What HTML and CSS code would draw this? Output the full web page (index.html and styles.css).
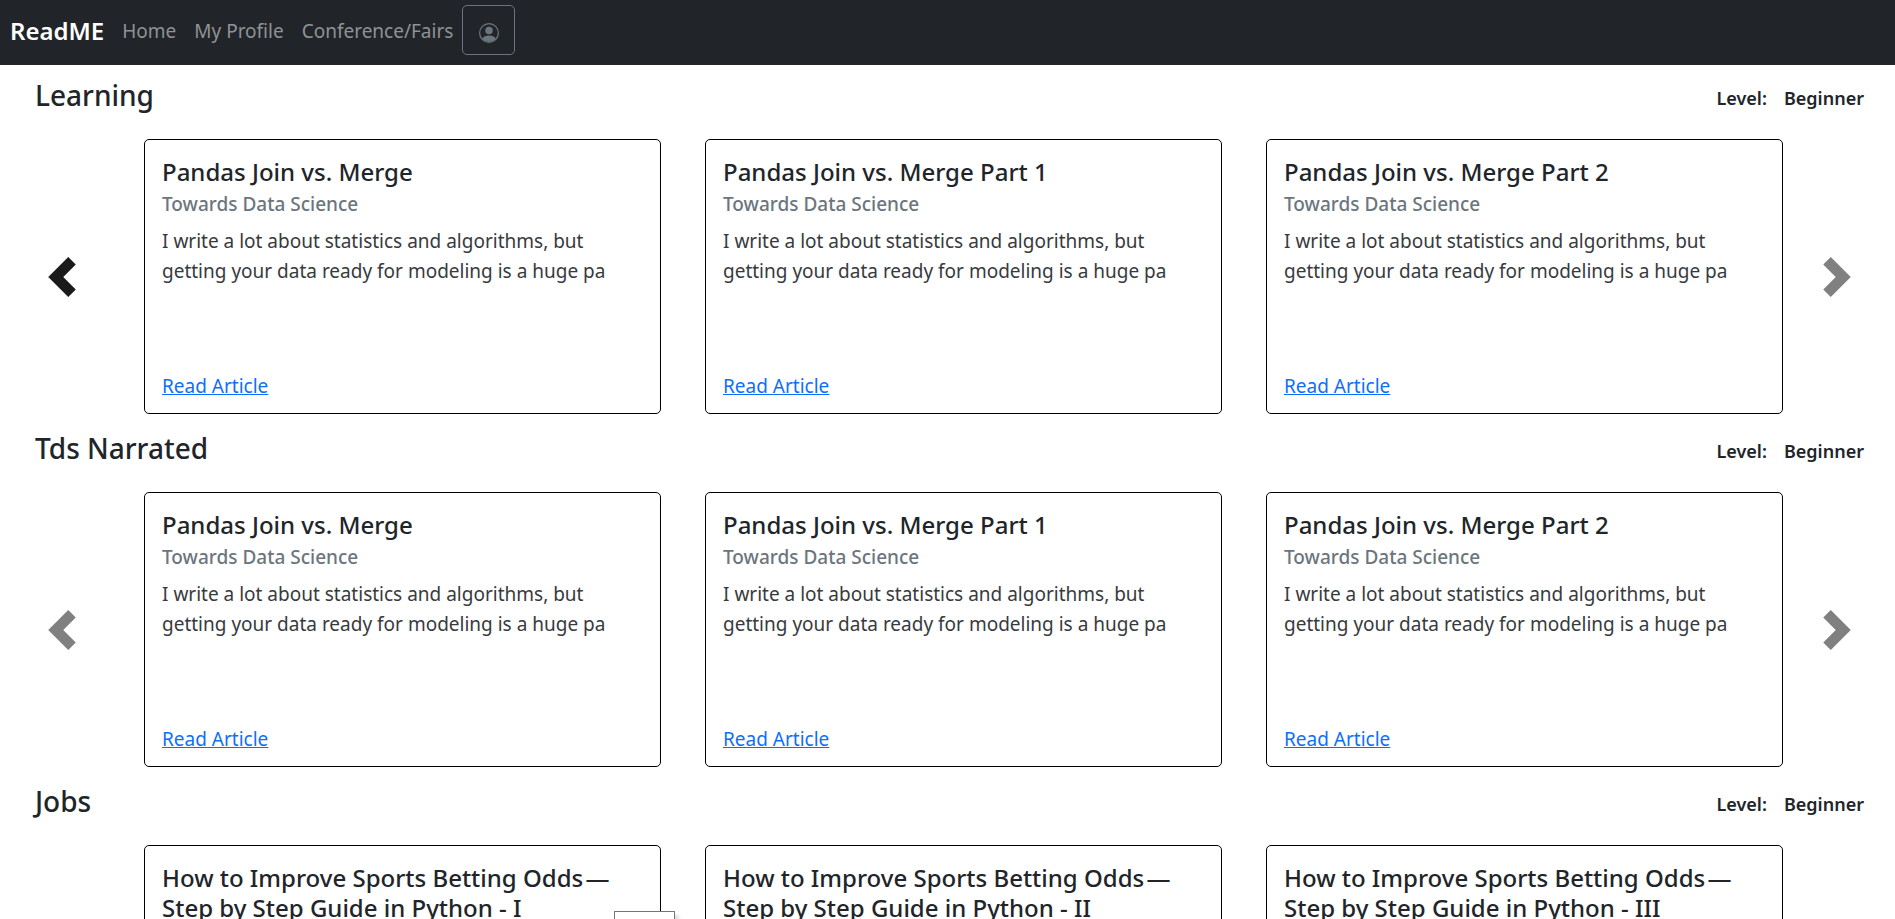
FILE: index.html
```
<!DOCTYPE html>
<html lang="en">
<head>
<meta charset="utf-8">
<title>ReadME</title>
<link rel="stylesheet" href="styles.css">
</head>
<body>
<svg class="symbols" aria-hidden="true">
  <symbol id="chevron-left" viewBox="0 0 8 8"><path d="M5.25 0l-4 4 4 4 1.5-1.5L4.25 4l2.5-2.5L5.25 0z"/></symbol>
  <symbol id="chevron-right" viewBox="0 0 8 8"><path d="M2.75 0l-1.5 1.5L3.75 4l-2.5 2.5L2.75 8l4-4-4-4z"/></symbol>
</svg>
<nav class="navbar">
  <a class="brand" href="#">ReadME</a>
  <a class="nav-link" href="#">Home</a>
  <a class="nav-link" href="#">My Profile</a>
  <a class="nav-link" href="#">Conference/Fairs</a>
  <button class="account" type="button" aria-label="Account">
    <svg class="account-icon" viewBox="0 0 16 16" fill="currentColor" aria-hidden="true">
      <path d="M13.468 12.37C12.758 11.226 11.195 10 8 10s-4.757 1.225-5.468 2.37A6.987 6.987 0 0 0 8 15a6.987 6.987 0 0 0 5.468-2.63z"/>
      <path d="M8 9a3 3 0 1 0 0-6 3 3 0 0 0 0 6z"/>
      <path fill-rule="evenodd" d="M8 1a7 7 0 1 0 0 14A7 7 0 0 0 8 1zM0 8a8 8 0 1 1 16 0A8 8 0 0 1 0 8z"/>
    </svg>
  </button>
</nav>
<main class="content">
  <section class="topic">
    <header class="topic-header">
      <h2 class="topic-title">Learning</h2>
      <p class="level"><span>Level:</span><span>Beginner</span></p>
    </header>
    <div class="carousel">
      <button class="control control-prev control-active" type="button" aria-label="Previous"><svg class="chevron"><use href="#chevron-left"/></svg></button>
      <div class="cards">
        <article class="card">
          <h3 class="card-title">Pandas Join vs. Merge</h3>
          <h4 class="card-source">Towards Data Science</h4>
          <p class="card-text">I write a lot about statistics and algorithms, but getting your data ready for modeling is a huge pa</p>
          <a class="card-link" href="#">Read Article</a>
        </article>
        <article class="card">
          <h3 class="card-title">Pandas Join vs. Merge Part 1</h3>
          <h4 class="card-source">Towards Data Science</h4>
          <p class="card-text">I write a lot about statistics and algorithms, but getting your data ready for modeling is a huge pa</p>
          <a class="card-link" href="#">Read Article</a>
        </article>
        <article class="card">
          <h3 class="card-title">Pandas Join vs. Merge Part 2</h3>
          <h4 class="card-source">Towards Data Science</h4>
          <p class="card-text">I write a lot about statistics and algorithms, but getting your data ready for modeling is a huge pa</p>
          <a class="card-link" href="#">Read Article</a>
        </article>
      </div>
      <button class="control control-next" type="button" aria-label="Next"><svg class="chevron"><use href="#chevron-right"/></svg></button>
    </div>
  </section>
  <section class="topic">
    <header class="topic-header">
      <h2 class="topic-title">Tds Narrated</h2>
      <p class="level"><span>Level:</span><span>Beginner</span></p>
    </header>
    <div class="carousel">
      <button class="control control-prev" type="button" aria-label="Previous"><svg class="chevron"><use href="#chevron-left"/></svg></button>
      <div class="cards">
        <article class="card">
          <h3 class="card-title">Pandas Join vs. Merge</h3>
          <h4 class="card-source">Towards Data Science</h4>
          <p class="card-text">I write a lot about statistics and algorithms, but getting your data ready for modeling is a huge pa</p>
          <a class="card-link" href="#">Read Article</a>
        </article>
        <article class="card">
          <h3 class="card-title">Pandas Join vs. Merge Part 1</h3>
          <h4 class="card-source">Towards Data Science</h4>
          <p class="card-text">I write a lot about statistics and algorithms, but getting your data ready for modeling is a huge pa</p>
          <a class="card-link" href="#">Read Article</a>
        </article>
        <article class="card">
          <h3 class="card-title">Pandas Join vs. Merge Part 2</h3>
          <h4 class="card-source">Towards Data Science</h4>
          <p class="card-text">I write a lot about statistics and algorithms, but getting your data ready for modeling is a huge pa</p>
          <a class="card-link" href="#">Read Article</a>
        </article>
      </div>
      <button class="control control-next" type="button" aria-label="Next"><svg class="chevron"><use href="#chevron-right"/></svg></button>
    </div>
  </section>
  <section class="topic">
    <header class="topic-header">
      <h2 class="topic-title">Jobs</h2>
      <p class="level"><span>Level:</span><span>Beginner</span></p>
    </header>
    <div class="carousel">
      <button class="control control-prev" type="button" aria-label="Previous"><svg class="chevron"><use href="#chevron-left"/></svg></button>
      <div class="cards">
        <article class="card">
          <h3 class="card-title">How to Improve Sports Betting Odds&#8202;— Step by Step Guide in Python - I</h3>
          <div class="tooltip"></div>
        </article>
        <article class="card">
          <h3 class="card-title">How to Improve Sports Betting Odds&#8202;— Step by Step Guide in Python - II</h3>
        </article>
        <article class="card">
          <h3 class="card-title">How to Improve Sports Betting Odds&#8202;— Step by Step Guide in Python - III</h3>
        </article>
      </div>
      <button class="control control-next" type="button" aria-label="Next"><svg class="chevron"><use href="#chevron-right"/></svg></button>
    </div>
  </section>
</main>
</body>
</html>
```
FILE: styles.css
```
* {
  box-sizing: border-box;
}

body {
  display: flex;
  flex-direction: column;
  height: 100vh;
  margin: 0;
  overflow: hidden;
  background: #fff;
  color: #212529;
  font-family: "Noto Sans", "Open Sans", sans-serif;
  font-size: 19px;
  line-height: 30px;
}

h2, h3, h4, p {
  margin: 0;
  font-weight: 500;
}

.symbols {
  display: none;
}

.navbar {
  display: flex;
  flex: none;
  align-items: flex-start;
  height: 65px;
  padding: 5px 10px;
  background: #212529;
}

.brand,
.nav-link {
  padding: 11px 9px;
  color: #909294;
  text-decoration: none;
}

.brand {
  padding-left: 0;
  color: #fff;
  font-size: 24px;
  font-weight: 600;
}

.account {
  display: flex;
  align-items: center;
  justify-content: center;
  width: 53px;
  height: 50px;
  padding: 6px 0 0;
  border: 1px solid #6c757d;
  border-radius: 5px;
  background: transparent;
  color: #6c757d;
}

.account-icon {
  width: 20px;
  height: 20px;
}

.content {
  display: flex;
  flex: 1;
  flex-direction: column;
  gap: 16px;
  min-height: 0;
  padding-top: 12px;
  overflow: hidden;
}

.topic {
  flex: none;
}

.topic-header {
  display: flex;
  align-items: flex-end;
  justify-content: space-between;
  margin-bottom: 26px;
  padding: 0 31px 0 35px;
}

.topic-title {
  font-size: 28px;
  line-height: 36px;
}

.level {
  display: flex;
  gap: 17px;
  font-size: 18px;
  font-weight: 600;
}

.carousel {
  display: flex;
  padding-right: 4px;
}

.control {
  display: flex;
  flex: none;
  align-items: center;
  justify-content: center;
  padding: 0;
  border: 0;
  background: transparent;
  color: #808080;
}

.control-prev {
  width: 124px;
  margin-right: 20px;
}

.control-next {
  width: 108px;
}

.control-active {
  color: #1a1a1a;
}

.chevron {
  width: 40px;
  height: 40px;
  fill: currentColor;
}

.cards {
  display: grid;
  flex: 1;
  grid-template-columns: repeat(3, 1fr);
  gap: 44px;
}

.card {
  position: relative;
  display: flex;
  flex-direction: column;
  align-items: flex-start;
  min-height: 275px;
  padding: 17px;
  border: 1px solid #000;
  border-radius: 5px;
}

.card-title {
  font-size: 24px;
  line-height: 30px;
}

.card-source {
  margin: 5px 0 10px;
  color: #6c757d;
  font-size: 19px;
  line-height: 24px;
}

.card-text {
  color: #373a3e;
  font-weight: 400;
}

.card-link {
  margin-top: auto;
  margin-bottom: -5px;
  color: #0d6efd;
}

.tooltip {
  position: absolute;
  top: 65px;
  right: -15px;
  width: 61px;
  height: 24px;
  border: 1px solid #767676;
  background: #fff;
  box-shadow: 4px 4px 3px #0000001f;
}
```
